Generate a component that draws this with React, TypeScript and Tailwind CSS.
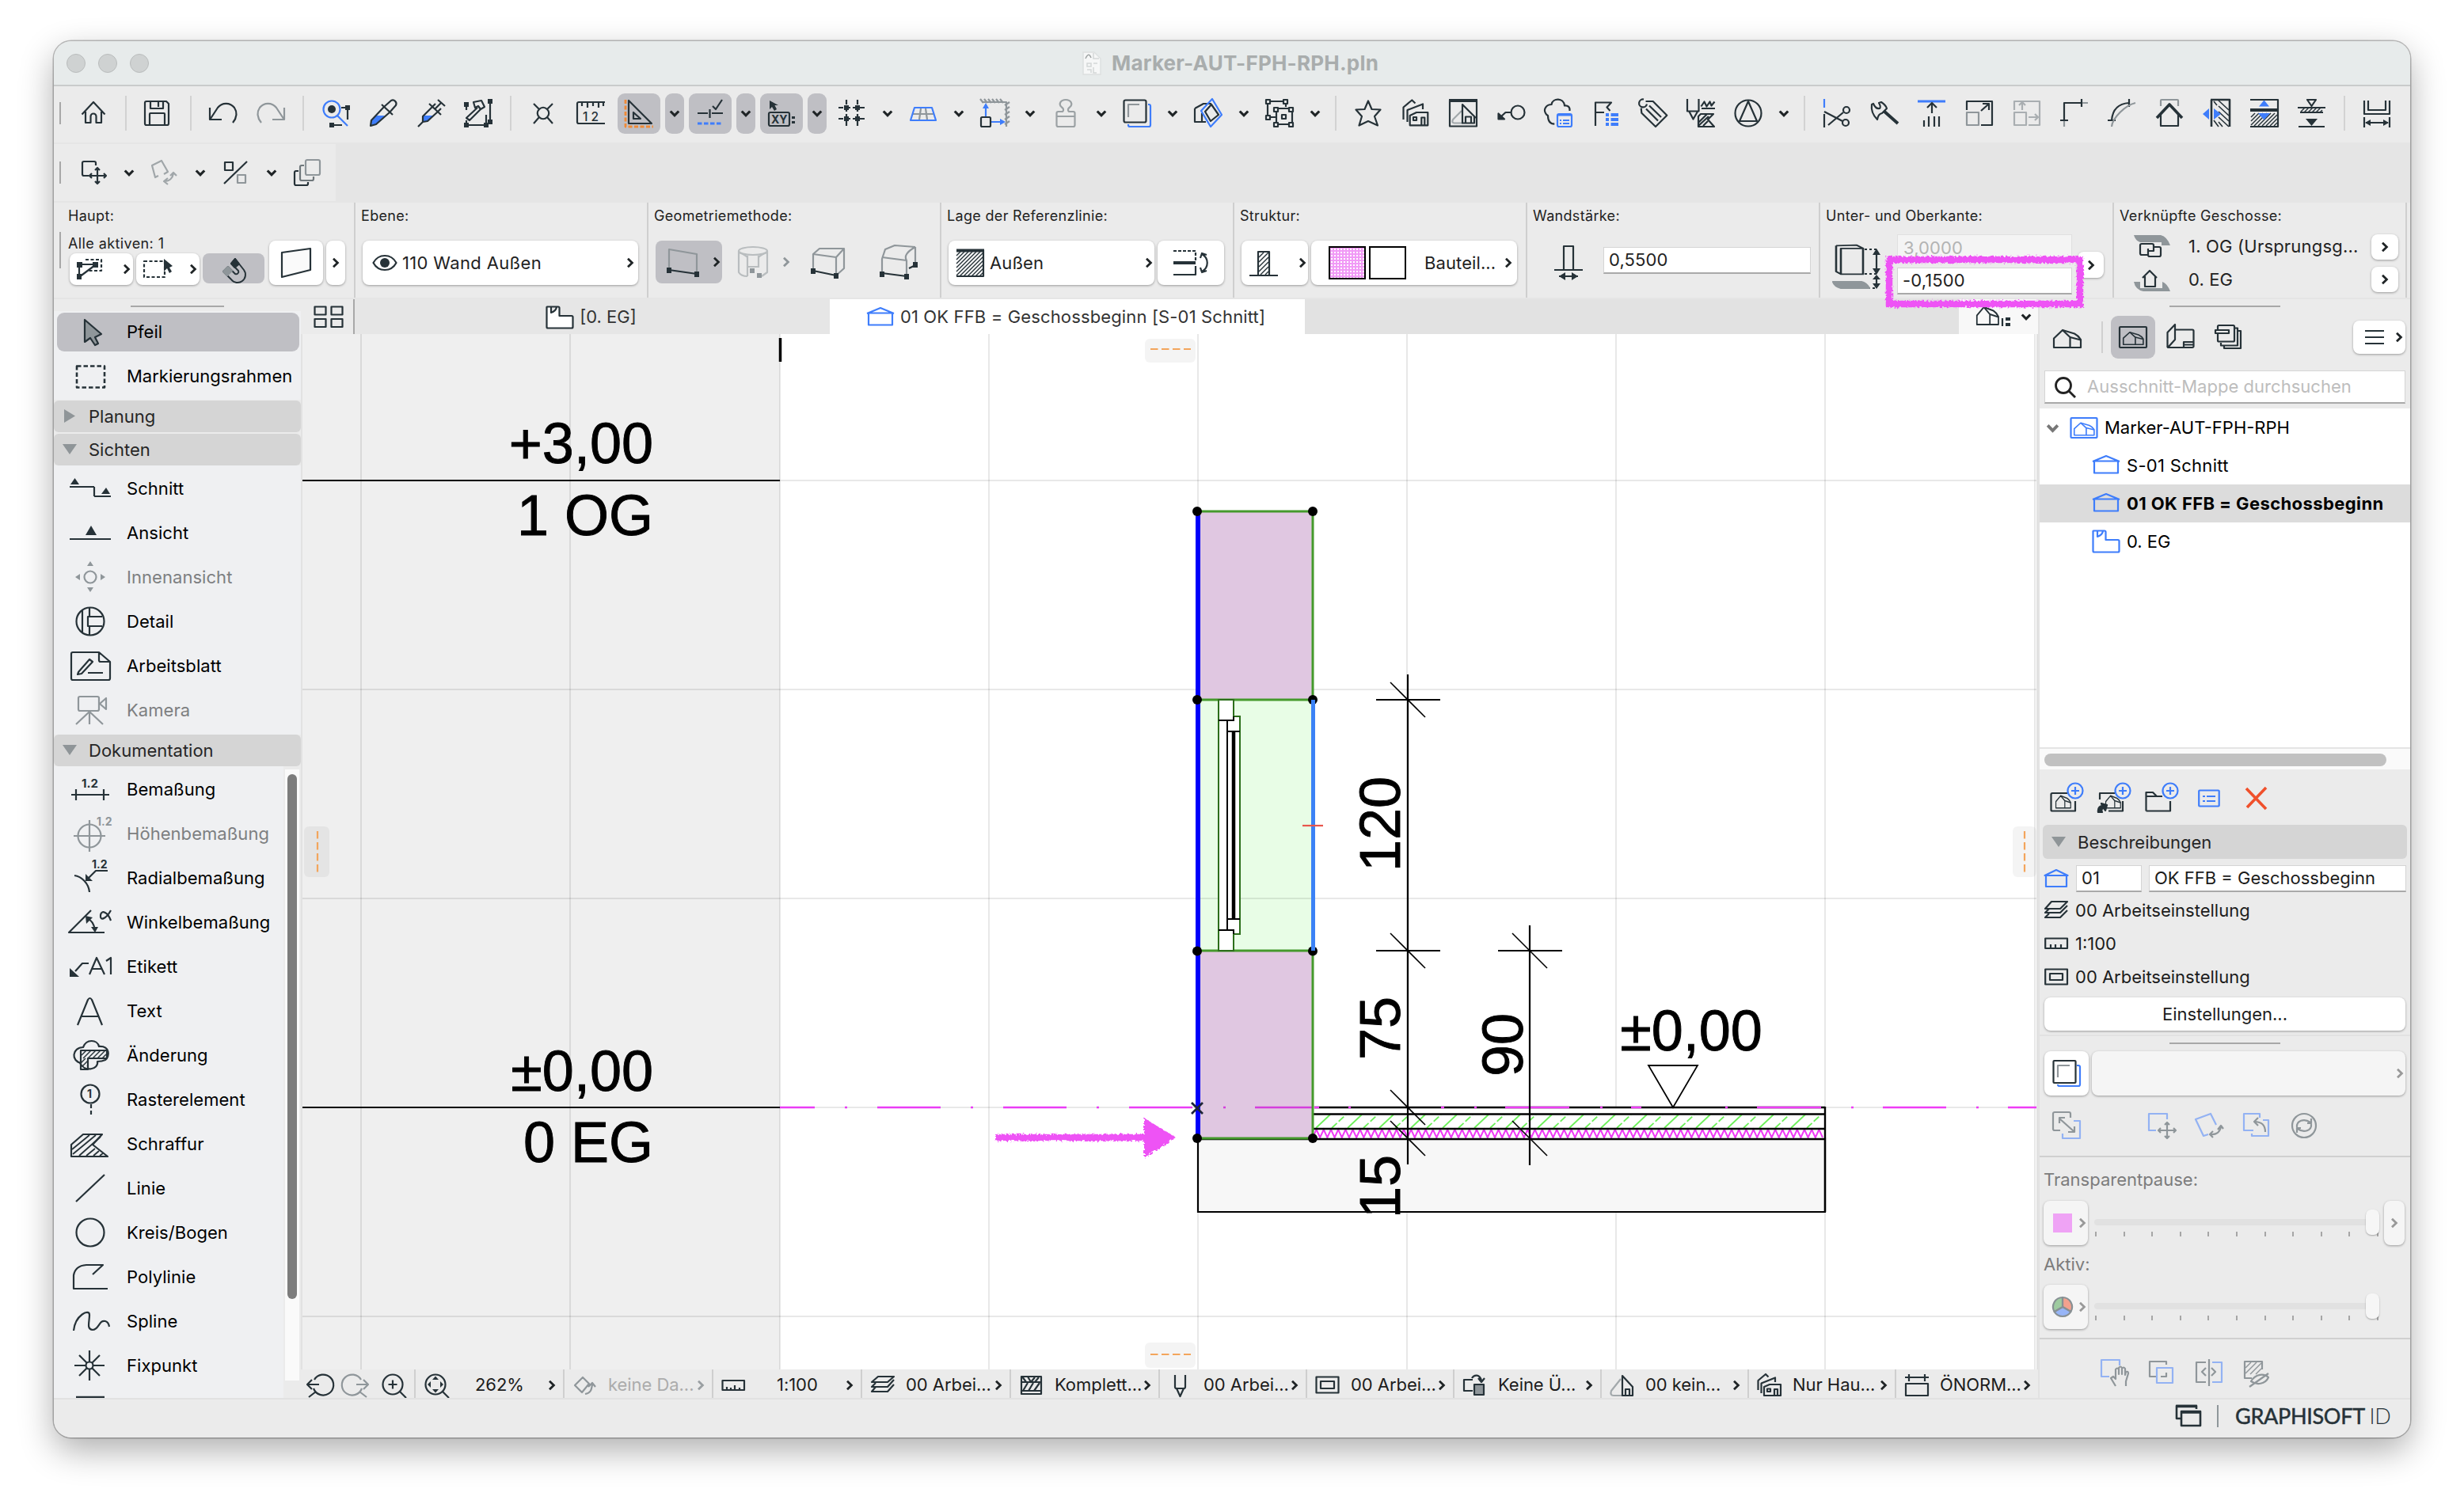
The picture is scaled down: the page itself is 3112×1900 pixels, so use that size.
import React from "react";

const D = "#263238";
const G = "#8f969a";
const B = "#3e7dfb";
const LB = "#93b2f3";
const P = "#ee52f5";

type Node = React.ReactNode;

function S({ w = 36, h = 36, c = D, sw = 2.2, children }: { w?: number; h?: number; c?: string; sw?: number; children: Node }) {
  return (
    <svg width={w} height={h} viewBox={`0 0 ${w} ${h}`} fill="none" stroke={c} strokeWidth={sw} strokeLinejoin="round" className="shrink-0 overflow-visible">
      {children}
    </svg>
  );
}

const Down = ({ c = "#1f2426", w = 14 }: { c?: string; w?: number }) => (
  <svg width={w} height={w} viewBox="0 0 14 14" fill="none" stroke={c} strokeWidth={3.2} className="shrink-0">
    <path d="M1.8 4.5 L7 9.8 L12.2 4.5" />
  </svg>
);
const Right = ({ c = "#1f2426" }: { c?: string }) => (
  <svg width={10} height={14} viewBox="0 0 10 14" fill="none" stroke={c} strokeWidth={2.8} className="shrink-0">
    <path d="M2 1.8 L7.4 7 L2 12.2" />
  </svg>
);

const hatch = (x0: number, x1: number, y0: number, y1: number, step: number, c = D, sw = 1.5) => {
  const out: Node[] = [];
  const h = y1 - y0;
  for (let x = x0 - h; x < x1; x += step) {
    const a = Math.max(x, x0);
    const b = Math.min(x + h, x1);
    out.push(<path key={x} stroke={c} strokeWidth={sw} d={`M${a} ${y1 - (a - x)} L${b} ${y1 - (b - x)}`} />);
  }
  return out;
};

const houseShape = (c: string) => (
  <g stroke={c}>
    <path d="M1 31 V19.500 L12 9 L21.500 18 V31 Z" />
    <path d="M12 9 L27 13.500 Q32 16 35 21 V31 H21.500" />
    <path d="M21.500 18 L35 21.500" />
  </g>
);

const ICON: Record<string, Node> = {
  home: <path d="M3.5 19.5 L18 4 L32.5 19.5 M8 16 V30 H14.5 V22 a3.5 3.5 0 0 1 7 0 V30 H28 V16" />,
  save: (
    <g transform="translate(-2 0)">
      <path d="M3 5 a2 2 0 0 1 2-2 H30 L33 6 V31 a2 2 0 0 1 -2 2 H5 a2 2 0 0 1 -2 -2 Z M10 3 V12 H26 V3 M20 4 V10 M9 33 V19 a1 1 0 0 1 1 -1 H27 a1 1 0 0 1 1 1 V33" />
    </g>
  ),
  undo: <path d="M1 11 V26 H16 M1.500 25.500 L11 11 A13.2 13.2 0 0 1 32 11 Q38 20 30 30" />,
  redo: <path stroke={G} d="M35 11 V26 H20 M34.500 25.500 L25 11 A13.2 13.2 0 0 0 4 11 Q-2 20 6 30" />,
  find: (
    <>
      <circle cx="13" cy="13" r="10.5" stroke={B} />
      <path d="M20 21 L33 34" stroke={B} />
      <circle cx="13" cy="13" r="5" fill={D} stroke="none" />
      <path d="M25 11 H33 V26 M13 33 H26" />
      <path d="M30 8 h6 v6 h-6z M10 30 h6 v6 h-6z" fill={D} stroke="none" />
    </>
  ),
  pipette: (
    <>
      <path d="M8 21 H20 L9 32 L3 34 L2 30 Z" fill={B} stroke="none" />
      <path d="M19 10 L3 27 L2 34 L9 32 L26 17 M16 7 L30 20 M19 10 L28 2 a4.5 4.5 0 0 1 6 6 L26 17" />
    </>
  ),
  syringe: (
    <>
      <path d="M9 21 H21 L14 28 L9 29 Z" fill={B} stroke="none" />
      <path d="M20 10 L8 22 V29 L14 28 L27 16 M8 29 L2 35 M16 6 L31 20 M23 13 L31 5 M27 1 L36 9 M20 10 L24 6 M27 16 L31 12" />
    </>
  ),
  hammer: (
    <>
      <path d="M3 7 V14 M3 27 V33 H28 M33 2 V27 M28 33 V20" />
      <path d="M12 4 L22 2 L26 10 L21 13 L18 9 L14 11 Z M17 11 L3 24 L7 27 L21 13" />
      <path d="M0 4h6v6h-6z M0 30h6v6h-6z M25 30h6v6h-6z M30 0h6v6h-6z M30 26h6v6h-6z" fill={D} stroke="none" />
    </>
  ),
  cross: <path d="M6 6 L13 13 C10 16 10 20 13 23 L6 31 M30 6 L23 13 C26 16 26 20 23 23 L30 31 M13 13 C16 10 20 10 23 13 M13 23 C16 26 20 26 23 23" />,
  ruler12: (
    <>
      <path d="M36 4 H3 a2 2 0 0 0 -2 2 V29 a2 2 0 0 0 2 2 H36 M7 5 V9 M14 5 V11 M21 5 V9 M28 5 V11 M34 5 V9" />
      <text x="8" y="27.500" fontSize="15.500" fontWeight="500" fill={D} stroke="none" letterSpacing="4" fontFamily="Inter, sans-serif">12</text>
    </>
  ),
  setsq: (
    <>
      <path d="M5 2 V31 H34 Z M11 17 V25 H20 Z" />
      <path d="M1 1 V35 H36" stroke="#f08a36" strokeDasharray="5 2.5" strokeWidth="2.8" />
    </>
  ),
  snap: (
    <>
      <path d="M2 18 H15 M20 18 H34 M17.500 13 V24 M21 9 L25 13 L33 1" />
      <path d="M2 31 H34" stroke={B} strokeDasharray="5.5 2.5" strokeWidth="2.8" />
    </>
  ),
  xy: (
    <>
      <path d="M3 2 V13 L6 10 L9 15 L12 13 L9.500 8 L14 8 Z" fill={D} stroke="none" />
      <rect x="2" y="17" width="26" height="17" rx="2" />
      <text x="5" y="30.500" fontSize="14" fontWeight="700" fill={D} stroke="none" fontFamily="Inter, sans-serif">XY</text>
      <path d="M31 22h4v3h-4z M31 28h4v3h-4z" fill={D} stroke="none" />
    </>
  ),
  gridsnap: (
    <>
      <path d="M1 11 H35 M1 25 H35 M11 1 V35 M25 1 V35" strokeDasharray="6 3" />
      <path d="M8 8h6v6h-6z M22 8h6v6h-6z M8 22h6v6h-6z M22 22h6v6h-6z" fill={D} stroke="none" />
    </>
  ),
  persp: (
    <>
      <path d="M4 19 H32 M15 12 L13 26 M21 12 L23 26" stroke={G} />
      <path d="M7 11 H29 L34 27 H2 Z" stroke={B} />
    </>
  ),
  elev: (
    <>
      <path d="M2 4 H33 V35" stroke={G} />
      {[4, 9, 14, 19, 24, 29].map((x) => <path key={x} d={`M${x} 5 l-4 -5`} stroke={G} />)}
      {[8, 14, 20, 26, 32].map((y) => <path key={y} d={`M31 ${y} l6 -4`} stroke={G} />)}
      <path d="M7 22 V8 M14 29 H26" stroke={B} />
      <path d="M3 12 L7 5 L11 12z M25 25 L32 29 L25 33z" fill={B} stroke="none" />
      <rect x="1" y="23" width="12" height="12" rx="1.5" />
    </>
  ),
  person: <path stroke="#9ba1a4" d="M14 16 C16 14 15 12 13 10.500 C8 6 12 1 18 1 C24 1 28 6 23 10.500 C21 12 20 14 22 16 H27.500 a2 2 0 0 1 2 2 V33 a2 2 0 0 1 -2 2 H8.500 a2 2 0 0 1 -2 -2 V18 a2 2 0 0 1 2 -2 Z M7 22 H29" />,
  trace: (
    <>
      <path d="M32 7 H33 a2 2 0 0 1 2 2 V33 a2 2 0 0 1 -2 2 H9 a2 2 0 0 1 -2 -2 V32" stroke={B} />
      <rect x="1.5" y="1.5" width="28" height="28" rx="2" />
      <path d="M7 23 V7 H21" stroke={G} />
    </>
  ),
  cube: (
    <>
      <path d="M1 12 V29 H15 M1 12 L12 6 H22 M10 28 V18" />
      <path d="M23 0 L35 20 L21 35 L9 15 Z" stroke={B} />
      <path d="M22 7 L31 20 L21 28 L14 16 Z" />
    </>
  ),
  group: (
    <>
      <path d="M4 3 H24 M3 4 V22 M26 4 V10 M13 12 H33 M13 32 H33 M14 13 V31 M34 13 V31 M4 23 H13" />
      {[[1, 1], [23, 1], [1, 21], [11, 11], [30, 11], [11, 30], [30, 30], [21, 20]].map(([x, y]) => (
        <rect key={`${x}-${y}`} x={x} y={y} width="5" height="5" fill="#ebebeb" />
      ))}
    </>
  ),
  star: <path d="M18 2.500 L22.500 13 L33.500 13.500 L26 22 L30 33.500 L18 28 L6.500 33.500 L10 22 L2.500 13.500 L13.500 13 Z" />,
  houses: (
    <>
      <path d="M2.500 26 V10.500 L13.300 1.500 L17.500 5.500 M7.500 29 V14 L27 6.500 V13" />
      <path d="M10.700 33.300 V21 L19 17 H33.300 V33.300 Z M15 23 h4 v4 h-4z M25.300 33 V23.500 h4 V33" />
    </>
  ),
  framehouse: (
    <>
      <path d="M16 15 L5 26 Q3 30.500 7 30.500 H16" stroke="#a2a8ab" />
      <rect x="1" y="1.500" width="34" height="33" />
      <path d="M0 2 H36" strokeWidth="4" />
      <path d="M17 30.500 V7 L34 24 M32 22 V30.500 H16 M21 30 V22.500 H28 V30" />
    </>
  ),
  key: (
    <>
      <circle cx="27" cy="17" r="8.500" />
      <path d="M18.700 17 H11.500 L5 23" />
      <path d="M2.500 18.500 V25.500 H10z" fill={D} />
    </>
  ),
  cloud: (
    <>
      <path d="M32.500 15 C33 10 30 8 26 8.500 C25 -2 11 -1.500 9.500 7 C3 7 -1 13 2 18 Q3 20 5 21 C5 27 7 31.500 13.300 31.700" />
      <rect x="17" y="19" width="18" height="16" rx="2" stroke={B} />
      <path d="M17 20.500 H35 M20 27 h2 M24 27 h8 M20 31 h2 M24 31 h8" stroke={B} />
    </>
  ),
  flag: (
    <>
      <path d="M5 34 V4.500 H25 L19.500 10.500 L23.500 15 M5 17 H16" />
      <path d="M18 18h4v4h-4z M24.500 18h9.500v4h-9.500z M18 24h4v4h-4z M24.500 24h9.500v4h-9.500z M18 30h4v4h-4z M24.500 30h9.500v4h-9.500z" fill={B} stroke="none" />
    </>
  ),
  tag: <path d="M6 0.500 A5 5 0 1 0 10 6.500 M2.700 11.700 L3.300 17.700 L21 35 L35.300 20.700 L17.700 3 H8.500 M9 12.500 L24 27.500 M13 8.500 L28 23" />,
  pencil: (
    <>
      <path d="M1 0 V15.500 H15.500 V0 M3.500 16 L8.500 25.500 L14 16 M18.500 9.500 l4-6 l3 6 l4-6 l2 5 l4-5" />
      <path d="M19 12 H36" />
      <path d="M18 19 H34 L27 26 L35 35 H15 V22 Z M15 30 L26 19 M15 34 L28 22 M21 34 L27 28" />
    </>
  ),
  circletri: (
    <>
      <circle cx="18" cy="18" r="16.5" />
      <path d="M18 3 L29 28 H7 Z" />
    </>
  ),
  scissors: (
    <>
      <path d="M2 0 V11" stroke={B} />
      <path d="M2 19 V36 M2 16 L25 28 M7 33 L26 17" />
      <circle cx="30" cy="14" r="4" />
      <circle cx="29" cy="30" r="4" />
    </>
  ),
  axe: (
    <>
      <path d="M2 7 C1 14 4 21 9 26 Q10 19 15 18 L21 12 Q20 8 14 4 L11 5 Q14 10 12 12 Q7 13 4 6 Z" />
      <path d="M17 15 L35 31" strokeWidth="4" />
    </>
  ),
  arrowup: (
    <>
      <path d="M0 3 H35" stroke={B} strokeWidth="3" />
      <path d="M18 18 V5 M12 11 L18 5 L24 11 M8 27 V35 M14 22 V35 M21 22 V35 M27 22 V35" />
    </>
  ),
  resize: (
    <>
      <path d="M2 14 V3 H34 V33 H20 M20 15 L29 7 M22 6 H30 V14" />
      <rect x="2" y="17" width="15" height="16" stroke={G} />
    </>
  ),
  resizegray: (
    <g stroke="#a9aeb1">
      <path d="M2 14 V3 H34 V33 H20 M12 14 V4 M8 8 L12 4 L16 8 M20 23 H32 M28 19 L32 23 L28 27" />
      <rect x="2" y="17" width="15" height="16" />
    </g>
  ),
  corner: (
    <>
      <path d="M5 27 V5 H27 M0 27 H10 M27 0 V10" />
      <path d="M5 28 V35 M28 5 H35" stroke={G} />
    </>
  ),
  arc: (
    <>
      <path d="M5 27 C6 14 12 6 27 5 M0 27 H10 M27 0 V10" />
      <path d="M5 35 C6 24 22 8 35 5" stroke={G} />
    </>
  ),
  houseup: (
    <>
      <path d="M7 9 V2 a1 1 0 0 1 1-1 H28 a1 1 0 0 1 1 1 V9" stroke={G} />
      <path d="M7 18 V34 H29 V18" />
      <path d="M2 24 L18 7 L34 24" strokeWidth="3.6" />
    </>
  ),
  wallh: (
    <>
      <path d="M11 1 V35 M10 1 H34 V35" strokeWidth="2.600" />
      {[2, 9, 16, 23].map((y) => <path key={y} d={`M20 ${y} L33 ${y + 12}`} strokeWidth="1.6" />)}
      <path d="M14 3 L18 8 M14 27 L20 35 M20 29 L25 35" strokeWidth="1.6" />
      <path d="M8 12 V26 L0 19z M14 12 V26 L23 19z" fill={B} stroke="none" />
    </>
  ),
  wallv: (
    <>
      <path d="M0 1 H35 V35 H0" />
      <path d="M0 14 H35" strokeWidth="4" />
      {hatch(1, 34, 18, 34, 5)}
      <path d="M11 9.500 L17.500 1.500 L24 9.500z M10 18 H25 L17.500 26.500z" fill={B} stroke="none" />
    </>
  ),
  level: (
    <>
      <path d="M12 1 H23 L17.500 9 Z M0 11 H35 M3 17 H32" />
      {hatch(4, 31, 11, 17, 5)}
      <path d="M10 25 H25 L17.500 34z" fill={D} stroke="none" />
      <path d="M1 35 H34" />
    </>
  ),
  dimh: (
    <>
      <path d="M2 2 V19 H34 V2 M7 2 V14 H29 V2 M2 23 V36 M34 23 V36 M4 30 H32" />
      <path d="M3 30 L10 26 V34z M33 30 L26 26 V34z" fill={D} stroke="none" />
    </>
  ),
  move: <path transform="translate(1 0)" d="M11 22 H5 a2 2 0 0 1 -2 -2 V6 a2 2 0 0 1 2 -2 H18 a2 2 0 0 1 2 2 V9 M22 12 V32 M12 22 H33 M19 15 L22 12 L25 15 M19 29 L22 32 L25 29 M15 19 L12 22 L15 25 M30 19 L33 22 L30 25" />,
  rotate: <path stroke="#a0a6a9" d="M10 22 L6 24 L2 9 L14 3 L22 17 L17 20 M18 29 C24 29 28 25 29 19 M25 22 L29 18 L33 22 M22 25 L17 29 L22 33" />,
  percent: (
    <g transform="translate(1 0)">
      <path d="M2 32 L31 4" />
      <rect x="3" y="5" width="10" height="10" />
      <rect x="19" y="21" width="10" height="10" stroke={G} />
    </g>
  ),
  copies: (
    <>
      <path d="M7 16 H4 a2 2 0 0 0 -2 2 V32 a2 2 0 0 0 2 2 H17 a2 2 0 0 0 2 -2 V30" />
      <path d="M14 9 H11 a2 2 0 0 0 -2 2 V26 a2 2 0 0 0 2 2 H24 a2 2 0 0 0 2 -2 V23" stroke="#6f777b" />
      <rect x="16" y="2" width="18" height="19" rx="2" stroke={G} />
    </>
  ),
};

const Ic = ({ n }: { n: string }) => <S>{ICON[n]}</S>;
const Cell = ({ n }: { n: string }) => <div className="flex w-[60px] shrink-0 items-center justify-center"><Ic n={n} /></div>;
const CellD = ({ n }: { n: string }) => (
  <div className="flex w-[90px] shrink-0 items-center">
    <div className="flex w-[60px] justify-center"><Ic n={n} /></div>
    <div className="flex w-[30px] justify-center"><Down /></div>
  </div>
);
const CellOn = ({ n }: { n: string }) => (
  <div className="flex w-[90px] shrink-0 items-center gap-[6px] pl-1">
    <div className="flex h-[51px] w-[54px] items-center justify-center rounded-[9px] bg-[#bfbfc4]"><Ic n={n} /></div>
    <div className="flex h-[51px] w-6 items-center justify-center rounded-[9px] bg-[#bfbfc4]"><Down /></div>
  </div>
);
const Sep = () => <div className="flex w-[22px] shrink-0 justify-center"><div className="h-[44px] w-[2px] bg-[#d2d2d2]" /></div>;
const Grip = ({ cls = "h-[28px]" }: { cls?: string }) => <div className="flex w-5 shrink-0 items-center pl-[7px]"><div className={`w-[2px] bg-[#a8a8a8] ${cls}`} /></div>;

function Toolbars() {
  return (
    <>
      <div className="flex h-[71px] shrink-0 items-center bg-[#ebebeb] pb-[3px]">
        <Grip />
        <Cell n="home" /><Sep /><Cell n="save" /><Sep /><Cell n="undo" /><Cell n="redo" /><Sep />
        <Cell n="find" /><Cell n="pipette" /><Cell n="syringe" /><Cell n="hammer" /><Sep />
        <Cell n="cross" /><Cell n="ruler12" /><CellOn n="setsq" /><CellOn n="snap" /><CellOn n="xy" />
        {["gridsnap", "persp", "elev", "person", "trace", "cube", "group"].map((n) => <CellD key={n} n={n} />)}
        <Sep />
        {["star", "houses", "framehouse", "key", "cloud", "flag", "tag", "pencil"].map((n) => <Cell key={n} n={n} />)}
        <CellD n="circletri" /><Sep />
        {["scissors", "axe", "arrowup", "resize", "resizegray", "corner", "arc", "houseup", "wallh", "wallv", "level"].map((n) => <Cell key={n} n={n} />)}
        <Sep /><Cell n="dimh" />
      </div>
      <div className="mt-[2px] flex h-[72px] w-[356px] shrink-0 items-center bg-[#ebebeb]">
        <Grip />
        <CellD n="move" /><CellD n="rotate" /><CellD n="percent" /><Cell n="copies" />
      </div>
    </>
  );
}

const Btn = ({ cls, children }: { cls: string; children?: Node }) => (
  <div className={`flex shrink-0 items-center rounded-[8px] shadow-[0_1px_3px_rgba(0,0,0,0.35)] ${cls.includes("bg-") ? "" : "bg-white"} ${cls}`}>{children}</div>
);
const Field = ({ cls, children }: { cls: string; children?: Node }) => (
  <div className={`flex shrink-0 items-center border border-b-2 border-[#d4d4d4] border-b-[#a9a9a9] bg-white pl-[6px] ${cls}`}>{children}</div>
);

function Group({ label, w, children }: { label: string; w: string; children: Node }) {
  return (
    <div className={`relative h-full shrink-0 border-r-2 border-[#cfcfcf] bg-[#ebebeb] pt-[5px] pl-[7px] ${w}`}>
      <div className="h-6 text-[18px] leading-6 tracking-[0.32px]">{label}</div>
      {children}
    </div>
  );
}

function InfoBox() {
  return (
    <div className="mt-[2px] flex h-[120px] shrink-0 text-[22px] tracking-[0.1px]">
      <div className="flex items-center bg-[#ebebeb]"><div className="w-[11px] pl-[7px]"><div className="h-[46px] w-[2px] bg-[#a8a8a8]" /></div></div>
      <Group label="Haupt:" w="w-[370px]">
        <div className="flex gap-1 pt-[11px]">
          <div className="w-[248px]">
            <div className="h-6 text-[18px] leading-6 tracking-[0.4px]">Alle aktiven: 1</div>
            <div className="flex items-start gap-1 pl-[2px]">
              <Btn cls="h-[40px] w-[80px] justify-between pr-[3px] pl-[8px]">
                <S w={36} h={30}><path d="M12 3 H32 V17 H14" strokeDasharray="4 2.500" /><path d="M4 9 H24 M4 9 V25 L24 10" /><path d="M1 6h7v7h-7z M21 6h7v7h-7z M1 21h6v7h-6z" fill={D} stroke="none" /></S>
                <Right />
              </Btn>
              <Btn cls="h-[40px] w-[80px] justify-between pr-[3px] pl-[8px]">
                <S w={38} h={30}><rect x="2" y="5" width="26" height="20" strokeDasharray="4 2.500" /><path d="M27 2 V18 L31 14 L34 20 L37 18 L34 13 L38 11z" fill={D} stroke="none" /></S>
                <Right />
              </Btn>
              <div className="flex h-[38px] w-[80px] items-center justify-center rounded-[8px] bg-[#bfbfc4] pt-1">
                <S w={36} h={32} sw={2}>
                  <path d="M15 8 L20 2 L31 16 A10 10 0 0 1 15 28 L5 18 L11 12 L20 21 A3 3 0 0 0 24 17 Z" />
                  <path d="M5 18 L11 12 L16 17 L10 23z" fill={G} stroke={G} />
                  <path d="M15 8 L20 2 L25 8.500 L19.500 13z" fill={D} />
                </S>
              </div>
            </div>
          </div>
        </div>
        <div className="absolute top-[48px] left-[261px] flex gap-1">
          <Btn cls="h-[56px] w-[68px] justify-center"><S w={40} h={38}><path d="M2 6 L38 1 V28 L2 37 Z" fill="#fafafa" /></S></Btn>
          <Btn cls="h-[56px] w-[24px] justify-center"><Right /></Btn>
        </div>
      </Group>
      <Group label="Ebene:" w="w-[370px]">
        <div className="flex pt-[19px] pl-[2px]">
          <Btn cls="h-[56px] w-[348px] pr-[5px] pl-[12px]">
            <S w={32} h={26}><path d="M1.500 13 C8 1 24 1 30.500 13 C24 25 8 25 1.500 13Z" /><circle cx="16" cy="13" r="6" fill={D} stroke="none" /></S>
            <span className="ml-[6px] flex-1 tracking-[0.35px]">110 Wand Außen</span>
            <Right />
          </Btn>
        </div>
      </Group>
      <Group label="Geometriemethode:" w="w-[370px]">
        <div className="flex items-center pt-[19px] pl-[2px]">
          <div className="flex h-[54px] w-[84px] items-center justify-between rounded-[8px] bg-[#bfbfc4] pr-[2px] pl-[14px]">
            <S w={40} h={40}><path d="M3 30 V4 L38 10 V35" stroke={G} /><path d="M3 30 L38 35" /><path d="M0 27h6v7h-6z M35 32h6v7h-6z" fill={D} stroke="none" /></S>
            <Right />
          </div>
          <div className="flex w-[88px] items-center justify-between pr-[2px] pl-[20px]">
            <S w={38} h={40} c="#b9bdbf"><ellipse cx="19" cy="6" rx="18" ry="5" /><path d="M1 6 V33 Q4 38 12 38 M37 6 V33 L30 38 M12 12 V38 M26 12 V27 M12 26 H26 M1 8 Q8 10 12 14 M37 8 Q30 10 26 14" /><path d="M15 28h6v6h-6z M24 34h6v6h-6z" fill={G} stroke="none" /></S>
            <Right c={G} />
          </div>
          <div className="w-[88px] pl-[25px]">
            <S w={42} h={40}><path d="M2 31 V10 L10 3 H41 L31 14 V37 M2 10 L31 14 M41 3 V28 L31 37" stroke={G} /><path d="M2 31 L31 37" /><path d="M-1 28h6v7h-6z M28 34h6v7h-6z" fill={D} stroke="none" /></S>
          </div>
          <div className="pl-[22px]">
            <S w={50} h={44}><path d="M4 36 V18 L8 6 L20 1 L46 3 M4 16 L35 20 V40 M46 3 Q30 12 35 20 M46 3 V24" stroke={G} /><path d="M4 36 L35 40 M46 26 L38 30" /><path d="M1 34h6v7h-6z M32 37h6v7h-6z M43 22h6v7h-6z" fill={D} stroke="none" /></S>
          </div>
        </div>
      </Group>
      <Group label="Lage der Referenzlinie:" w="w-[370px]">
        <div className="flex gap-1 pt-[19px] pl-[2px]">
          <Btn cls="h-[56px] w-[260px] pr-[2px] pl-[10px]">
            <S w={35} h={36}><path d="M0 2.500 H35" strokeWidth="4" /><path d="M34 2 V35 H0" />{hatch(0, 34, 4, 35, 5)}</S>
            <span className="ml-[7px] flex-1">Außen</span>
            <Right />
          </Btn>
          <Btn cls="h-[56px] w-[84px] justify-center">
            <S w={44} h={36}><path d="M0 3 H28 V15" strokeDasharray="4 2" /><path d="M0 18 H28" strokeWidth="4" /><path d="M0 33 H28 V22 M36 7 C45 12 45 24 36 29 M34 12 L36 6 L42 8 M42 28 L36 30 L34 24" /></S>
          </Btn>
        </div>
      </Group>
      <Group label="Struktur:" w="w-[370px]">
        <div className="flex gap-1 pt-[19px] pl-[2px]">
          <Btn cls="h-[56px] w-[84px] justify-between pr-[2px] pl-[10px]">
            <S w={36} h={34}><path d="M0 33 H36" /><path d="M11 33 V3 H25 V33" />{hatch(12, 24, 4, 32, 6)}</S>
            <Right />
          </Btn>
          <Btn cls="h-[56px] w-[260px] pr-[6px] pl-[22px]">
            <div className="h-[42px] w-[47px] border-2 border-black bg-[#f19af6] bg-[radial-gradient(circle,#fff_0.9px,transparent_1.2px)] bg-size-[4px_4px]" />
            <div className="ml-1 h-[42px] w-[47px] border-2 border-black bg-white" />
            <span className="ml-[23px] flex-1 whitespace-nowrap">Bauteil...</span>
            <Right />
          </Btn>
        </div>
      </Group>
      <Group label="Wandstärke:" w="w-[370px]">
        <div className="flex pt-[24px] pl-[27px]">
          <S w={36} h={46}><path d="M12 32 V2 H24 V32 M0 32 H36 M6 40 H30" /><path d="M6 40 l8 -5 v10z M30 40 l-8 -5 v10z" fill={D} stroke="none" /></S>
          <Field cls="ml-[26px] mt-[3px] h-[34px] w-[262px]">0,5500</Field>
        </div>
      </Group>
      <Group label="Unter- und Oberkante:" w="w-[371px]">
        <div className="flex pt-[11px] pl-[9px]">
          <div className="pt-[13px]">
            <S w={60} h={58}>
              <path d="M4 2 L30 1 L38 7 H10 V55 M4 2 V50 L10 55 H38 V7" transform="scale(1 0.680)" strokeWidth="2.600" />
              <path d="M40 6 H56 M40 37 H56 M44 55 H56" strokeDasharray="3 3" />
              <path d="M55 8 V36 M55 40 V54" />
              <path d="M50 13 L55 5 L60 13z M50 30 L55 38 L60 30z M50 44 L55 38 L60 44z M50 49 L55 56 L60 49z" fill={D} stroke="none" />
              <path d="M0 47 H36 Q42 48 46 55 H10 Q2 53 0 47z" fill={G} stroke={G} />
            </S>
          </div>
          <div className="ml-[21px] flex w-[221px] flex-col gap-2">
            <div className="flex h-[34px] items-center border border-[#e0e0e0] bg-[#f4f4f4] pl-[7px] text-[#b3b3b3]">3,0000</div>
            <Field cls="h-[34px] w-full">-0,1500</Field>
          </div>
          <div className="pt-[22px] pl-[7px]"><Btn cls="h-[33px] w-[33px] justify-center"><Right /></Btn></div>
        </div>
        <svg width="256" height="72" viewBox="0 0 256 72" className="absolute top-[64px] left-[80px] z-10" fill="none">
          <filter id="chalk" x="-5%" y="-20%" width="110%" height="140%">
            <feTurbulence type="fractalNoise" baseFrequency="0.35" numOctaves="2" seed="4" />
            <feDisplacementMap in="SourceGraphic" scale="6" />
          </filter>
          <rect x="7" y="8" width="241" height="56" stroke={P} strokeWidth="8.500" filter="url(#chalk)" />
        </svg>
      </Group>
      <Group label="Verknüpfte Geschosse:" w="w-[370px]">
        <div className="flex flex-col gap-2 pt-[10px] pr-[9px] pl-[18px]">
          <div className="flex h-[33px] items-center">
            <S w={46} h={46}>
              <path d="M0 8 H34 Q42 10 46 21 H35 V17 H8 Q2 15 0 8z" fill={G} stroke="none" />
              <path d="M17 36 H10 a2 2 0 0 1-2-2 V24 a2 2 0 0 1 2-2 H23 a2 2 0 0 1 2 2 V31 H18 M25 26 H32 a2 2 0 0 1 2 2 V36 a2 2 0 0 1-2 2 H20 a2 2 0 0 1-2-2 V28" transform="translate(0 -3)" />
            </S>
            <span className="ml-[23px] flex-1 whitespace-nowrap tracking-[0.2px]">1. OG (Ursprungsg...</span>
            <Btn cls="h-[32px] w-[34px] justify-center"><Right /></Btn>
          </div>
          <div className="flex h-[34px] items-center">
            <S w={46} h={30}><path d="M0 18 H8 V26 H36 V18 Q42 20 46 30 H12 Q2 28 0 18z" fill={G} stroke="none" /><path d="M11 13 L20 4 L29 13 M14 11 V24 H27 V11" /></S>
            <span className="ml-[23px] flex-1">0. EG</span>
            <Btn cls="h-[32px] w-[34px] justify-center"><Right /></Btn>
          </div>
        </div>
      </Group>
      <div className="flex-1 bg-[#ebebeb]" />
    </div>
  );
}

const TOOL: Record<string, Node> = {
  Schnitt: <><path d="M1 18 H32 M32 18 V30 M32 30 H53" /><path d="M2 15 L7.500 7 L13 15z M41 27 L47 19 L52 27z" fill={D} stroke="none" /></>,
  Ansicht: <><path d="M1 28 H53" /><path d="M21 23 L28 11 L35 23z" fill={D} stroke="none" /></>,
  Innenansicht: <g stroke={G}><circle cx="27" cy="20" r="7.500" /><path d="M23 6 L27 0 L31 6z M23 33 L27 39 L31 33z M14 16 L8 20 L14 24z M40 16 L46 20 L40 24z" fill={G} stroke="none" /></g>,
  Detail: <><circle cx="27" cy="20" r="17.500" /><path d="M17 6 V34 M26 3 V14 M26 26 V37 M42 14 H24 V26 H42" /></>,
  Arbeitsblatt: <><path d="M5 3 H38 L52 15 V36 a2 2 0 0 1-2 2 H5 a2 2 0 0 1-2-2 V5 a2 2 0 0 1 2-2Z M38 3 V13 a2 2 0 0 0 2 2 H52 M12 28 L26 12 L30 15 L16 30 L11 31Z M24 29 H43" /></>,
  Kamera: <g stroke={G}><rect x="12" y="3" width="26" height="18" rx="2" /><path d="M39 12 L47 5 V19Z M26 21 V38 M26 22 L9 38 M26 22 L43 38" /></g>,
  Bemaßung: <><path d="M3 27 H51 M9 20 V34 M44 20 V34" /><text x="16" y="18" fontSize="15" fontWeight="700" fill={D} stroke="none">1.2</text></>,
  Höhenbemaßung: <g stroke={G}><circle cx="26" cy="23" r="14.500" /><path d="M6 23 H46 M26 3 V43" /><text x="35" y="10" fontSize="14" fontWeight="700" fill={G} stroke="none">1.2</text></g>,
  Radialbemaßung: <><path d="M7 17 C16 18 25 27 26 38 M24 21 L34 11 H49" /><path d="M21 15 V24 H30z" fill={D} stroke="none" /><text x="29" y="8" fontSize="14" fontWeight="700" fill={D} stroke="none">1.2</text></>,
  Winkelbemaßung: <><path d="M45 33 H0 L28 5 M24 16 C30 18 32 24 33 30" /><path d="M21 12 L30 14 L22 22z M28 26 L37 26 L33 33z" fill={D} stroke="none" /><path d="M53 5 C47 16 39 19 40 11 C41 4 49 7 53 18" /></>,
  Etikett: <><path d="M8 26 L17 16 H25 M26 30 L35 9 L45 30 M29 23 H41 M47 13 L53 9 V30" /><path d="M1 22 V33 H13z" fill={D} stroke="none" /></>,
  Text: <path d="M11 38 L24 6 Q26.500 2 29 6 L42 38 M16 27 H37" />,
  Änderung: <><path d="M16 30 C2 28 4 10 18 10 C22 -1 36 0 38 9 C52 8 52 22 46 26 C42 28 36 28 36 28 C38 38 20 42 14 30" /><path d="M15 14 H48 V24 H24 V38 H15Z" />{hatch(16, 47, 14, 24, 6)}{hatch(15, 24, 24, 34, 6)}</>,
  Rasterelement: <><circle cx="27" cy="13" r="11.500" /><path d="M28 26 V42" strokeDasharray="5 3" /><text x="23" y="18" fontSize="14" fontWeight="700" fill={D} stroke="none">1</text></>,
  Schraffur: (
    <>
      <path d="M3 36 V21 L18 8 H42 L30 21 L49 36Z" />
      <path d="M4 27 L26 9 M5 33 L34 9 M13 35 L40 11 M22 35 L33 26 M31 35 L38 29 M39 35 L43 32" strokeWidth="1.800" />
    </>
  ),
  Linie: <path d="M9 37 L45 3" />,
  "Kreis/Bogen": <circle cx="27" cy="20" r="17.500" />,
  Polylinie: <path d="M49 35 H6 V18 Q8 6 22 5 H43 L30 17" />,
  Spline: <path d="M6 32 C8 12 26 4 26 12 C26 22 22 30 30 31 C38 31 38 18 46 20 Q50 21 51 27" />,
  Fixpunkt: <><circle cx="26" cy="20" r="4.500" /><path d="M26 1 V15 M26 25 V39 M7 20 H21 M31 20 H45 M13 7 L23 17 M39 7 L29 17 M13 33 L23 23 M39 33 L29 23" /></>,
  "": <path d="M9 4 H45" strokeWidth="2.400" />,
};

const Tool = ({ n, dim }: { n: string; dim?: boolean }) => (
  <div className={`flex h-[56px] shrink-0 items-center pl-[19px] ${dim ? "text-[#7d7f81]" : "text-black"}`}>
    <S w={54} h={40}>{TOOL[n]}</S>
    <span className="ml-[19px] tracking-[0.05px]">{n}</span>
  </div>
);

const Head = ({ t, open = true, cls = "h-10" }: { t: string; open?: boolean; cls?: string }) => (
  <div className={`flex shrink-0 items-center rounded-[6px] bg-[#d5d5d5] pl-[11px] text-[#262626] ${cls}`}>
    <svg width="18" height="18" viewBox="0 0 18 18" fill="#8f9598">{open ? <path d="M0 2 H18 L9 15z" /> : <path d="M2 0 V17 L16 8.500z" />}</svg>
    <span className="ml-[15px]">{t}</span>
  </div>
);

function Toolbox() {
  return (
    <div className="flex w-[312px] shrink-0 flex-col overflow-hidden bg-[#ebebeb] text-[22px]">
      <div className="flex h-[15px] shrink-0 justify-center pt-2"><div className="h-[2px] w-[118px] bg-[#a8a8a8]" /></div>
      <div className="h-[112px] shrink-0 bg-[#eff0f2] px-1 pt-[2px]">
        <div className="flex h-[49px] w-[306px] items-center rounded-[9px] bg-[#bfbfc4] text-black">
          <S w={54} h={40}><path d="M35 4 V32 L42 27 L48 36 L52 34 L48 26 L56 22Z" fill={G} /></S>
          <span className="ml-[34px]">Pfeil</span>
        </div>
        <div className="flex h-[63px] items-center pl-[20px] text-black">
          <S w={38} h={30}><rect x="5" y="1.500" width="35" height="27" strokeDasharray="5.500 3" strokeWidth="2.600" /></S>
          <span className="ml-[30px]">Markierungsrahmen</span>
        </div>
      </div>
      <Head t="Planung" open={false} cls="mt-px h-10" />
      <Head t="Sichten" cls="mt-[2px] h-10" />
      <div className="flex shrink-0 flex-col bg-[#eff0f2] pt-px pb-[3px]">
        <Tool n="Schnitt" /><Tool n="Ansicht" /><Tool n="Innenansicht" dim /><Tool n="Detail" /><Tool n="Arbeitsblatt" /><Tool n="Kamera" dim />
      </div>
      <Head t="Dokumentation" cls="h-10" />
      <div className="flex min-h-0 flex-1 overflow-hidden">
        <div className="flex w-[290px] flex-col overflow-hidden bg-[#eff0f2] pt-px">
          {["Bemaßung", "Höhenbemaßung", "Radialbemaßung", "Winkelbemaßung", "Etikett", "Text", "Änderung", "Rasterelement", "Schraffur", "Linie", "Kreis/Bogen", "Polylinie", "Spline", "Fixpunkt", ""].map((n) => (
            <Tool key={n} n={n} dim={n === "Höhenbemaßung"} />
          ))}
        </div>
        <div className="mt-1 ml-[2px] flex h-[772px] w-[18px] justify-center bg-[#fafafa] pt-[6px]"><div className="h-[663px] w-3 rounded-full bg-[#7c7c7c]" /></div>
      </div>
    </div>
  );
}

const Slash = ({ x, y, bar = true }: { x: number; y: number; bar?: boolean }) => (
  <g stroke="#000" strokeWidth="2.2">
    {bar && <path d={`M${x - 40} ${y} H${x + 41}`} />}
    <path d={`M${x - 22} ${y - 22} L${x + 22} ${y + 22}`} strokeWidth="1.6" />
  </g>
);

function Drawing() {
  const vs = [456, 720, 985, 1249, 1513, 1777, 2041, 2305, 2570];
  const hs = [607, 871, 1135, 1399, 1663];
  const zig: string[] = [];
  for (let x = 1658, i = 0; x <= 2304; x += 4.6, i++) zig.push(`${i ? "L" : "M"}${x} ${i % 2 ? 1427 : 1437}`);
  const green: Node[] = [];
  for (let x = 1662, i = 0; x < 2294; x += 20, i++) green.push(<path key={x} d={`M${x} 1425 L${x + 18} 1408`} strokeDasharray={i % 2 ? "9 3" : undefined} />);
  return (
    <svg width="2190" height="1308" viewBox="382 422 2190 1308" className="block bg-white" fontFamily="'Liberation Sans', Arial, sans-serif" fontSize="72" fill="none">
      <rect x="382" y="422" width="603" height="1308" fill="#efefef" />
      <g stroke="#000" strokeOpacity="0.09" strokeWidth="2">
        {vs.map((x) => <path key={x} d={`M${x} 422 V1730`} />)}
        {hs.map((y) => <path key={y} d={`M382 ${y} H2572`} />)}
      </g>
      <path d="M382 607 H985 M382 1399 H985" stroke="#000" strokeWidth="2.2" />
      <path d="M985.500 427 V457" stroke="#000" strokeWidth="3.500" />
      <g fill="#000" stroke="#000" strokeWidth="0.900" textAnchor="end">
        <text x="825" y="585">+3,00</text><text x="825" y="675.500">1 OG</text>
        <text x="825" y="1377.500">±0,00</text><text x="825" y="1468">0 EG</text>
      </g>
      <path d="M1513 1438 H2305 V1531 H1513Z" fill="#f7f7f7" stroke="#000" strokeWidth="2.200" />
      <path d="M1658 1399 H2305 V1438 H1658Z" fill="#fff" />
      <g stroke="#6df05a" strokeWidth="1.800">{green}</g>
      <path d={zig.join(" ")} stroke="#ee3df5" strokeWidth="2" />
      <path d="M1658 1407.500 H2305 M1658 1426 H2305 M1513 1439 H2305 M2305 1398 V1531" stroke="#000" strokeWidth="2.400" />
      <path d="M985 1399 H1658" stroke="#ea3df5" strokeWidth="2.400" strokeDasharray="80 38 3 38" strokeDashoffset="36" />
      <rect x="1513" y="646" width="145" height="238" fill="#e0c7e1" />
      <rect x="1513" y="1201" width="145" height="237" fill="#e0c7e1" />
      <path d="M1513 884 H1658 V1201 H1513Z" fill="#e8fde6" />
      <path d="M1513 1135 H1658" stroke="#d2e6d0" strokeWidth="2" />
      <path d="M1585 1399 H1658 M1545 1399 h3" stroke="#d43fdc" strokeWidth="2.400" />
      <path d="M1514 646 H1658 V1438 H1514 M1514 884 H1658 M1514 1201 H1658" stroke="#459a2c" strokeWidth="3" />
      <path d="M1539 884 H1558 V905 H1566 V1180 H1558 V1201 H1539Z" fill="#fff" stroke="#2c6e1b" strokeWidth="2" />
      <path d="M1539 910 H1558 V905 M1550 910 V1175 M1539 1175 H1558 V1180 M1550 924 H1566 M1550 1161 H1566" stroke="#000" strokeWidth="2" />
      <path d="M1558 924 V1161" stroke="#000" strokeWidth="4.500" />
      <path d="M1513 646 V1438" stroke="#0000fb" strokeWidth="6" />
      <g fill="#000">
        {[646, 884, 1201.5, 1438].map((y) => <g key={y}><circle cx="1512" cy={y} r="6" /><circle cx="1658" cy={y} r="6" /></g>)}
      </g>
      <path d="M1658.500 884 V1201" stroke="#3b82f6" strokeWidth="5" />
      <path d="M1645 1043 H1671" stroke="#e8564c" strokeWidth="2.200" />
      <path d="M1505 1393 L1519 1407 M1519 1393 L1505 1407" stroke="#1d2338" strokeWidth="2.800" />
      <path d="M1660 1399 H2305" stroke="#000" strokeWidth="2.400" />
      <path d="M1660 1399 H1666 M1703 1399 h3 M1820 1399 h4 M1862 1399 h3 M1901 1399 H1982 M2021 1399 h3 M2060 1399 H2073 M2179 1399 h3 M2219 1399 H2300 M2338 1399 h3 M2378 1399 H2458 M2496 1399 h3 M2536 1399 H2572" stroke="#ee3df5" strokeWidth="2.400" />
      <path d="M1778 852 V1471 M1932 1169 V1472" stroke="#000" strokeWidth="2.200" />
      <Slash x={1778} y={884} /><Slash x={1778} y={1201} /><Slash x={1778} y={1399} bar={false} /><Slash x={1778} y={1438} bar={false} />
      <Slash x={1932} y={1201} /><Slash x={1932} y={1438} bar={false} />
      <g fill="#000" stroke="#000" strokeWidth="0.900" textAnchor="middle">
        <text transform="translate(1768 1041) rotate(-90)">120</text>
        <text transform="translate(1768 1299) rotate(-90)">75</text>
        <text transform="translate(1923 1320) rotate(-90)">90</text>
        <text transform="translate(1768 1499) rotate(-90)">15</text>
        <text x="2136" y="1327">±0,00</text>
      </g>
      <path d="M2082 1346 H2144 L2113 1399Z" stroke="#000" strokeWidth="1.800" />
      <g filter="url(#chalk)">
        <path d="M1257 1437 H1450" stroke={P} strokeWidth="8.500" />
        <path d="M1446 1414 L1483 1437 L1446 1461Z" fill={P} stroke={P} strokeWidth="2" />
      </g>
      <g fill="#000" fillOpacity="0.045">
        <rect x="1446" y="428" width="64" height="30" rx="6" /><rect x="1446" y="1696" width="64" height="32" rx="6" />
        <rect x="384" y="1044" width="32" height="64" rx="6" /><rect x="2542" y="1044" width="30" height="64" rx="6" />
      </g>
      <path d="M1453 441 H1504 M1453 1711 H1504 M401 1050 V1102 M2557 1050 V1102" stroke="#f3a55c" strokeWidth="2.200" strokeDasharray="9.500 4.500" />
    </svg>
  );
}

const ViewIcon = ({ c = D }: { c?: string }) => (
  <S w={36} h={28} c={c}><path d="M1 9 L18 2 L35 9 M2 8.500 H34 M3 9 V23.500 H33 V9" /></S>
);
const PlanIcon = ({ c = D, bg = "none" }: { c?: string; bg?: string }) => (
  <S w={36} h={30} c={c}><path d="M2 1.500 H16 a1.500 1.500 0 0 1 1.500 1.500 V13 H33 a1.500 1.500 0 0 1 1.500 1.500 V27 a1.500 1.500 0 0 1-1.500 1.500 H3 a1.500 1.500 0 0 1-1.500-1.500 V2Z M7 2 V9 Q13 7 14 2" fill={bg} /></S>
);

const SB: Record<string, Node> = {
  back: <><path d="M10 9 A13 13 0 1 1 9 20 M1 15 H16 M7 9 L1 15 L7 21 M12 24 L3 31" /></>,
  fwd: <g stroke={G}><path d="M22 9 A13 13 0 1 0 23 20 M31 15 H16 M25 9 L31 15 L25 21 M20 24 L29 31" /></g>,
  plus: <><circle cx="15" cy="15" r="12.500" /><path d="M24 24 L32 32 M15 9.500 V20.500 M9.500 15 H20.500" /></>,
  fit: <><circle cx="15" cy="15" r="12.500" /><path d="M24 24 L32 32" /><path d="M11 9 L15 4.500 L19 9z M11 21 L15 25.500 L19 21z M9 11 V19 L5 15z M21 11 V19 L25 15z" fill={D} stroke="none" /></>,
  orient: <g stroke={G}><path d="M3 16 L13 6 L21 14 L12 25 Z M16 27 C23 26 24 22 25 15 M20 18 L25 13 L29 18" /></g>,
  scale: <path d="M1.500 10 H29 V22 H1.500Z M7 22 V18 M12 22 V19 M17 22 V16 M23 22 V19" />,
  layers: <path d="M10 5 H30 L22 12 H2Z M7 13 L2 18 H22 L30 9 M7 18 L2 24 H22 L30 15" />,
  structure: <><path d="M3 5 H28 V27 H3Z M3 12 H28 M3 23 H28" /><path d="M4 5 L9 12 M11 5 L15 12 L20 6 M20 12 L25 6 M5 23 L11 13 M12 23 L18 13 M19 23 L26 13" /></>,
  pen: <path d="M9 3 V18 Q9 20 11 20 H20 Q22 20 22 18 V3 M11 20 L15.500 30 L20 20" />,
  mvo: <><rect x="1.500" y="5.500" width="28" height="20" /><rect x="7" y="11" width="17" height="9" /></>,
  over: <><path d="M13 23 H2 V9 H13 M12 7 C15 2 22 2 24 10 M20 7 L24 12 L28 7" /><rect x="15" y="15" width="12" height="13" fill={G} /></>,
  reno: <><path d="M14 8 L2 23 Q0 29 5 29 H16" stroke="#a2a8ab" /><path d="M16 4 L29 18 V29 H16Z M20 29 V21 H25 V29" /></>,
  nur: <><path d="M1.500 22 V10 L11 2 L14.500 5.500 M5.500 26 V13.500 L23 6.500 V12" /><path d="M9 29 V18 L16 15 H30 V29 Z M13 20.500 h4 v3.500 h-4z M22 29 V21 h4 V29" /></>,
  dim: <path d="M1 6 H31 M6 2 V11 M26 2 V11 M2 14 H30 V29 H2Z" />,
};

const Stat = ({ icon, t, w, dim, pad = "ml-[13px]" }: { icon: string; t: string; w: string; dim?: boolean; pad?: string }) => (
  <div className={`flex h-full shrink-0 items-center border-l-2 border-[#cfcfcf] pt-[3px] pr-[9px] pl-[10px] ${w} ${dim ? "text-[#acacac]" : ""}`}>
    <S w={32} h={32}>{SB[icon]}</S>
    <span className={`flex-1 whitespace-nowrap ${pad}`}>{t}</span>
    <Right c={dim ? "#9a9fa2" : undefined} />
  </div>
);

function Center() {
  return (
    <div className="flex w-[2194px] shrink-0 flex-col">
      <div className="flex h-[44px] shrink-0 bg-[#e4e4e4] text-[22px] text-[#333]">
        <div className="flex w-[68px] items-center justify-end border-r-2 border-[#a8a8a8] bg-[#ebebeb] pr-3">
          <S w={38} h={28}><path d="M1.500 1.500 h14 v10 h-14z M22.500 1.500 h14 v10 h-14z M1.500 17 h14 v10 h-14z M22.500 17 h14 v10 h-14z" /></S>
        </div>
        <div className="flex w-[600px] items-center justify-center gap-[7px] bg-[#e6e6e6] pt-px pr-[3px]"><PlanIcon bg="#fff" /><span>[0. EG]</span></div>
        <div className="flex w-[600px] items-center justify-center gap-[7px] bg-white pt-px pr-[4px]"><ViewIcon c={B} /><span className="tracking-[0.14px]">01 OK FFB = Geschossbeginn [S-01 Schnitt]</span></div>
        <div className="w-[826px] bg-[#e2e2e2]" />
        <div className="flex flex-1 items-center bg-[#f8f8f8] pl-[22px]">
          <S w={44} h={32}><g transform="translate(0 -5) scale(0.800 1)">{houseShape(D)}</g><path d="M33 18 V28" /><path d="M37 17h6v4h-6z M37 24h6v4h-6z" fill={D} stroke="none" /></S>
          <span className="ml-[12px] flex"><Down /></span>
        </div>
      </div>
      <div className="h-[1308px] shrink-0 border-x-2 border-[#e2e2e2]"><Drawing /></div>
      <div className="flex h-[36px] items-center overflow-hidden bg-[#ebebeb] pl-[7px] text-[22px] tracking-[-0.05px] text-[#1c1c1c]">
        <div className="flex w-[138px] gap-[15px] pt-[3px]"><S w={32} h={32}>{SB.back}</S><S w={32} h={32}>{SB.fwd}</S><S w={32} h={32}>{SB.plus}</S></div>
        <Stat icon="fit" t="262%" w="w-[188px]" pad="ml-[33px]" />
        <Stat icon="orient" t="keine Da..." w="w-[188px]" dim />
        <Stat icon="scale" t="1:100" w="w-[188px]" pad="ml-[38px]" />
        <Stat icon="layers" t="00 Arbei..." w="w-[188px]" />
        <Stat icon="structure" t="Komplett..." w="w-[188px]" />
        <Stat icon="pen" t="00 Arbei..." w="w-[186px]" />
        <Stat icon="mvo" t="00 Arbei..." w="w-[186px]" />
        <Stat icon="over" t="Keine Ü..." w="w-[186px]" />
        <Stat icon="reno" t="00 kein..." w="w-[186px]" />
        <Stat icon="nur" t="Nur Hau..." w="w-[186px]" />
        <Stat icon="dim" t="ÖNORM..." w="w-[181px]" />
      </div>
    </div>
  );
}

const PlusBadge = () => (
  <g stroke={B}><circle cx="32" cy="9" r="9.500" fill="#ebebeb" /><path d="M32 4 V14 M27 9 H37" /></g>
);

function Slider({ extra, children }: { extra?: boolean; children: Node }) {
  return (
    <div className="flex h-[56px] shrink-0 items-center">
      <Btn cls="h-[56px] w-[56px] justify-between bg-[#f5f5f5] pr-[2px] pl-[10px] shadow-[0_1px_2px_rgba(0,0,0,0.2)]">{children}<Right c="#999" /></Btn>
      <div className="relative ml-2 h-[34px] w-[360px]">
        <div className="mt-[12px] h-[8px] rounded-full bg-[#e1e1e1]" />
        <div className="mt-[8px] flex justify-between pr-px pl-px">
          {Array.from({ length: 11 }, (_, i) => <div key={i} className="h-[6px] w-[2px] bg-[#a6a6a6]" />)}
        </div>
        <div className="absolute top-0 right-0 h-[32px] w-[17px] rounded-[7px] bg-[#f6f6f6] shadow-[0_1px_2px_rgba(0,0,0,0.3)]" />
      </div>
      {extra && <Btn cls="ml-[6px] h-[56px] w-[26px] justify-center bg-[#f5f5f5] shadow-[0_1px_2px_rgba(0,0,0,0.2)]"><Right c="#999" /></Btn>}
    </div>
  );
}

const Row = ({ icon, t }: { icon: Node; t: string }) => <div className="flex h-[42px] shrink-0 items-center gap-[9px]">{icon}<span>{t}</span></div>;
const C60 = ({ children }: { children?: Node }) => <div className="flex w-[60px] shrink-0 justify-center">{children}</div>;

function Navigator() {
  return (
    <div className="flex w-[470px] shrink-0 flex-col border-l-2 border-[#e2e2e2] bg-[#ebebeb] text-[22px]">
      <div className="flex h-[18px] shrink-0 justify-center pt-2 pr-px"><div className="h-[2px] w-[140px] bg-[#a8a8a8]" /></div>
      <div className="flex h-[66px] shrink-0 items-center pr-[6px] pb-[6px]">
        <div className="flex w-[78px] justify-center pr-[9px]"><S>{houseShape(D)}</S></div>
        <div className="h-10 w-[2px] bg-[#d0d0d0]" />
        <div className="ml-[10px] flex h-[54px] w-[56px] items-center justify-center rounded-[9px] bg-[#bfbfc4]">
          <S><rect x="1" y="5" width="34" height="26" rx="1" /><g transform="translate(5 5.500) scale(0.740 0.700)">{houseShape(D)}</g></S>
        </div>
        <div className="ml-[2px] flex">
          <C60><S><path d="M1.500 31 V12 L11 2 V21 L2 31 H33 a1.500 1.500 0 0 0 1.500-1.500 V10 a1.500 1.500 0 0 0-1.500-1.500 H11 M22 31 V24 H35 M22 27.500 H35" /></S></C60>
          <C60><S><path d="M5 9 V4.500 A1.500 1.500 0 0 1 6.500 3 H24.500 A1.500 1.500 0 0 1 26 4.500 V22 A1.500 1.500 0 0 1 24.500 23.500 H6.500 A1.500 1.500 0 0 1 5 22 V14 M2 9 H19 V13 H2Z M9 25 V28.500 H30 V6.500 H27 M13 29 V32 H34 V10 H31" /></S></C60>
        </div>
        <div className="flex-1" />
        <Btn cls="h-[42px] w-[66px] justify-end gap-3 pr-[3px]">
          <S w={26} h={20}><path d="M0 2 H24 M0 10 H24 M0 18 H24" /></S><Right />
        </Btn>
      </div>
      <div className="flex h-[54px] shrink-0 px-[6px] pt-[6px]">
        <Field cls="h-[42px] w-[456px] text-[#bdbdbd]">
          <S w={46} h={36} c="#222" sw={2.8}><circle cx="17" cy="16" r="9.500" /><path d="M24 23 L32 31" /></S>
          <span className="ml-px tracking-[0.03px]">Ausschnitt-Mappe durchsuchen</span>
        </Field>
      </div>
      <div className="h-[428px] shrink-0 bg-white text-black">
        <div className="flex h-12 items-center pl-2">
          <Down c="#777" w={17} />
          <div className="ml-[13px]"><S><rect x="1.500" y="6" width="33" height="25" stroke={B} rx="1" /><g transform="translate(5 6) scale(0.740 0.700)">{houseShape(B)}</g></S></div>
          <span className="ml-[8px]">Marker-AUT-FPH-RPH</span>
        </div>
        <div className="flex h-12 items-center gap-[8px] pl-[66px]"><ViewIcon c={B} /><span className="tracking-[0.3px]">S-01 Schnitt</span></div>
        <div className="flex h-12 items-center gap-[8px] bg-[#dcdcdc] pl-[66px] font-bold tracking-[0.4px]"><ViewIcon c={B} /><span className="whitespace-nowrap">01 OK FFB = Geschossbeginn</span></div>
        <div className="flex h-12 items-center gap-[8px] pl-[66px]"><PlanIcon c={B} /><span>0. EG</span></div>
      </div>
      <div className="h-7 shrink-0 border-t-2 border-[#e4e4e4] bg-[#fafafa] px-[6px] pt-[6px]"><div className="h-4 w-[432px] rounded-full bg-[#c1c1c1]" /></div>
      <div className="flex h-[70px] shrink-0 items-center pt-[3px] pl-1">
        <C60><S w={42} h={38}><path d="M22 12 H3 a1.500 1.500 0 0 0-1.500 1.500 V33 a1.500 1.500 0 0 0 1.500 1.500 H32 V22" /><g transform="translate(7 9) scale(0.550 0.700)">{houseShape(D)}</g><PlusBadge /></S></C60>
        <C60><S w={42} h={38}><path d="M22 12 H3 V20 M14 34.500 H32 V22" /><g transform="translate(10 9) scale(0.550 0.700)">{houseShape(D)}</g><path d="M1 36 C0 30 4 28 6 28 L5 25 L12 27 L10 34 L8 31 C5 31 5 34 6 36z" fill={D} /><PlusBadge /></S></C60>
        <C60><S w={42} h={38}><path d="M1.500 34.500 V11 H10 L15 16 H22 M1.500 16 H15 M1.500 34.500 H32 V22" /><PlusBadge /></S></C60>
        <C60><S w={28} h={24} c={B}><rect x="1.200" y="1.500" width="25.500" height="20" rx="1" /><path d="M6 9 h3 M11 9 h11 M6 15 h3 M11 15 h11" /></S></C60>
        <C60><S w={28} h={30} c="#f0502b" sw={3.6}><path d="M1 2 L26 28 M26 1 L2 26" /></S></C60>
      </div>
      <div className="shrink-0 pr-1 pl-1"><Head t="Beschreibungen" cls="h-[43px] pt-px" /></div>
      <div className="flex flex-col pr-[6px] pl-[6px] text-[#1c1c1c]">
        <div className="flex h-[44px] items-center pt-[6px]">
          <S w={30} h={26} c={B}><path d="M0.500 9 L15 2 L29.500 9Z M2 9 V23 H28 V9" /></S>
          <Field cls="ml-[10px] h-[34px] w-[83px]">01</Field>
          <Field cls="ml-[9px] h-[34px] w-[325px] whitespace-nowrap">OK FFB = Geschossbeginn</Field>
        </div>
        <Row icon={<S w={30} h={28}><path d="M9 3 H29 L20 12 H1Z M6 12 L1 17 H20 L29 8 M6 18 L1 23 H20 L29 14" /></S>} t="00 Arbeitseinstellung" />
        <Row icon={<S w={30} h={16}><path d="M1.200 1.500 H29 V14 H1.200Z M8 14 V9 M14 14 V9 M21 14 V9" /></S>} t="1:100" />
        <Row icon={<S w={30} h={22}><path d="M1.200 1.500 H29 V20.500 H1.200Z M7 7 H23 V15 H7Z" /></S>} t="00 Arbeitseinstellung" />
        <Btn cls="mt-[5px] h-[42px] w-[456px] justify-center">Einstellungen...</Btn>
      </div>
      <div className="mt-[5px] flex h-[21px] shrink-0 justify-center border-t-2 border-[#e2e2e2] pt-[8px]"><div className="h-[2px] w-[140px] bg-[#a8a8a8]" /></div>
      <div className="flex h-[57px] shrink-0 gap-1 pl-[6px]">
        <Btn cls="h-[56px] w-[56px] justify-center">
          <S><path d="M31 8 H33 a2 2 0 0 1 2 2 V32 a2 2 0 0 1-2 2 H9 a2 2 0 0 1-2-2" stroke={B} /><rect x="1.500" y="2" width="28" height="28" rx="1" /><path d="M7 23 V8 H22" stroke={G} /></S>
        </Btn>
        <Btn cls="h-[56px] w-[396px] justify-end bg-[#f5f5f5] pr-[2px] shadow-[0_1px_2px_rgba(0,0,0,0.2)]"><Right c="#999" /></Btn>
      </div>
      <div className="flex h-[77px] shrink-0 items-center border-b-2 border-[#d0d0d0] pb-px pl-1">
        <C60><S c={G}><path d="M10 24 H3 a2 2 0 0 1-2-2 V3 a2 2 0 0 1 2-2 H21 a2 2 0 0 1 2 2 V8 M9 9 L27 25 M9 15 V8 H16 M20 26 H28 V19" /><path d="M27 12 H35 V34 H13 V28" stroke={LB} /></S></C60>
        <C60 />
        <C60><S c={G}><path d="M11 24 H2 V3 H25 V10" stroke={LB} /><path d="M25 14 V34 M14 24 H36 M22 17 L25 14 L28 17 M22 31 L25 34 L28 31 M17 21 L14 24 L17 27 M33 21 L36 24 L33 27" /></S></C60>
        <C60><S c={G}><path d="M17 29 L11 31 L1 10 L20 3 L27 17" stroke={LB} /><path d="M19 29 C27 30 32 26 33 19 M29 23 L33 18 L36 22 M23 25 L19 29 L23 33" /></S></C60>
        <C60><S c={G}><path d="M14 24 H2 V3 H22 V8 M26 11 H33 V31 H12 V28" stroke={LB} /><path d="M29 26 C29 16 23 13 15 13 M20 8 L15 13 L20 18" /></S></C60>
        <C60><S c={G}><circle cx="18" cy="18" r="15" /><path d="M9 20 C8 12 18 8 26 14 M22 15 H27 V9 M27 16 C28 24 18 28 10 22 M14 21 H9 V27" /></S></C60>
      </div>
      <div className="flex h-[230px] shrink-0 flex-col border-b-2 border-[#d0d0d0] pt-[2px] pl-[5px] text-[#7c7c7c]">
        <div className="flex h-[53px] items-center">Transparentpause:</div>
        <Slider extra><div className="ml-[2px] h-6 w-6 bg-[#efa3f5]" /></Slider>
        <div className="flex h-[50px] items-center pb-px">Aktiv:</div>
        <Slider>
          <S w={28} h={28} c="#879094"><path d="M14 14 V2 A12 12 0 0 1 24.400 20Z" fill="#f3a18e" /><path d="M14 14 L24.400 20 A12 12 0 0 1 3.600 20Z" fill="#97b5f7" /><path d="M14 14 L3.600 20 A12 12 0 0 1 14 2Z" fill="#9ecba0" /></S>
        </Slider>
      </div>
      <div className="flex flex-1 items-center pt-[10px] pl-16">
        <C60><S c={G}><path d="M12 23 H2 V2 H25 V9" stroke={LB} /><path d="M20 35 L14 25 L17 23 L20 26 V14 q2-3 4 0 V20 V12 q2-3 4 0 V20 V13 q2-3 4 0 V21 L33 17 q3-1 3 2 L33 29 V35" /></S></C60>
        <C60><S c={G}><path d="M11 23 H3 V4 H24 V8 M24 18 V23 H17" /><rect x="12" y="12" width="20" height="19" stroke={LB} /></S></C60>
        <C60><S c={G}><path d="M14 5 H2 V30 H14 M18 1 V35 M14 12 L9 17 L14 22 M21 12 L26 17 L21 22" /><path d="M22 5 H34 V30 H22" stroke={LB} /></S></C60>
        <C60><S c={G}><path d="M12 25 H3 V4 H25 V14" />{hatch(4, 24, 5, 20, 7, G)}<path d="M11 29 C17 19 28 19 33 24 C29 33 18 34 11 29Z M9 36 L33 19" /></S></C60>
      </div>
    </div>
  );
}

export default function App() {
  return (
    <div className="h-[1900px] w-[3112px] overflow-hidden bg-white pt-[52px] pl-[68px] font-['Inter',sans-serif] text-[#222]">
      <div className="flex h-[1764px] w-[2976px] flex-col overflow-hidden rounded-[22px] bg-[#e5e5e5] shadow-[0_0_0_1.5px_rgba(0,0,0,0.25),0_16px_44px_rgba(0,0,0,0.32)]">
        <div className="relative flex h-[57px] shrink-0 items-center justify-center border-b-2 border-[#c9cbcb] bg-[#e7ebeb]">
          <div className="absolute left-[16px] flex gap-4">
            {[0, 1, 2].map((i) => <div key={i} className="size-6 rounded-full border border-[#b9bcbc] bg-[#cfd2d2]" />)}
          </div>
          <svg width="24" height="30" viewBox="0 0 24 30" fill="#f6f7f7" stroke="#dde0e0" strokeWidth="1.500" className="-ml-1"><path d="M1 1 H15 L23 9 V29 H1Z" /><path d="M4 9 Q8 0 11 8" stroke="#9fa4a4" fill="none" /><path d="M14 2 V9 H21 M6 15 h5 v4 h-5z M14 15 h5 M6 23 h5 v4 M14 20 v7 h4" stroke="#d3d7d7" fill="none" /></svg>
          <span className="ml-[13px] text-[26px] font-bold tracking-[0.2px] text-[#a9adad]">Marker-AUT-FPH-RPH.pln</span>
        </div>
        <Toolbars />
        <InfoBox />
        <div className="mt-[2px] flex h-[1388px] shrink-0">
          <Toolbox />
          <Center />
          <Navigator />
        </div>
        <div className="flex h-[50px] shrink-0 items-center border-t-2 border-[#e2e2e2] bg-[#ebebeb] pb-[6px] pl-[2679px]">
          <S w={34} h={30} sw={2.6}><path d="M7 18 H2 V2 H27 V6" /><rect x="8" y="9" width="24" height="18" /><path d="M1 2.500 H28 M8 10 H32" strokeWidth="3.500" /></S>
          <div className="ml-[19px] h-7 w-[2px] bg-[#8f969a]" />
          <span className="ml-[21px] font-['Lato',sans-serif] text-[27px] tracking-[-0.3px] text-[#263238]"><span className="[-webkit-text-stroke:0.5px_#263238]">GRAPHISOFT</span> <span className="font-light">ID</span></span>
        </div>
      </div>
    </div>
  );
}
